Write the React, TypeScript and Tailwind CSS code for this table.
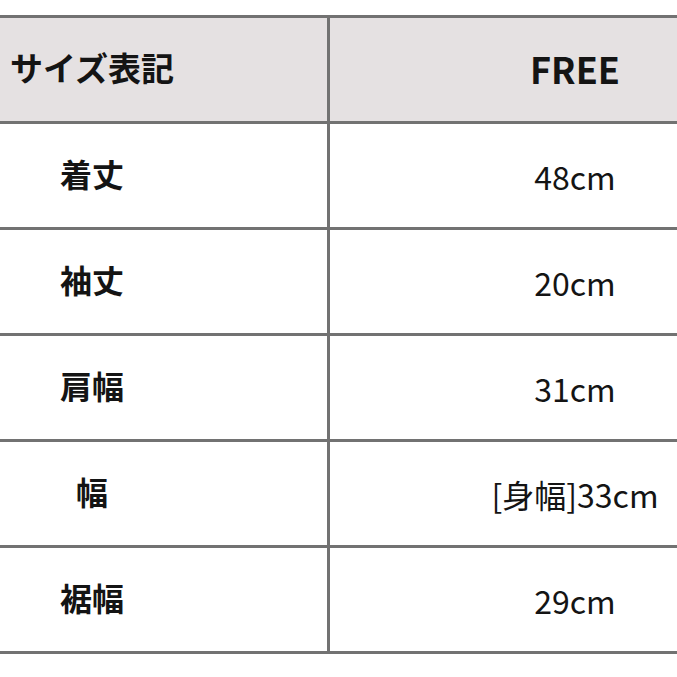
import React from 'react';

const rows: { label: string; value: string }[] = [
  { label: '着丈', value: '48cm' },
  { label: '袖丈', value: '20cm' },
  { label: '肩幅', value: '31cm' },
  { label: '幅', value: '[身幅]33cm' },
  { label: '裾幅', value: '29cm' },
];

const font = { fontFamily: '"Noto Sans CJK JP", "Noto Sans", sans-serif' };

export default function App() {
  return (
    <div className="w-[677px] h-[677px] bg-white pt-[15px] text-[#141414]" style={font}>
      <div className="border-t-[3px] border-[#727272]">
        <div className="grid grid-cols-[330px_1fr] h-[106px] border-b-[3px] border-[#727272] bg-[#e5e1e2]">
          <div className="border-r-[3px] border-[#727272] flex items-center pl-[10px] pb-[4px]">
            <span className="text-[33px] font-bold leading-none">サイズ表記</span>
          </div>
          <div className="flex items-center justify-end pb-[4px]">
            <span className="w-[204px] text-center text-[36px] font-bold leading-none">FREE</span>
          </div>
        </div>
        {rows.map((r) => (
          <div key={r.label} className="grid grid-cols-[330px_1fr] h-[106px] border-b-[3px] border-[#727272]">
            <div className="border-r-[3px] border-[#727272] flex items-center pl-[11px] pb-[6px]">
              <span className="w-[162px] text-center text-[32px] font-bold leading-none">{r.label}</span>
            </div>
            <div className="flex items-center justify-end">
              <span className="w-[204px] text-center text-[32px] leading-none">{r.value}</span>
            </div>
          </div>
        ))}
      </div>
    </div>
  );
}
